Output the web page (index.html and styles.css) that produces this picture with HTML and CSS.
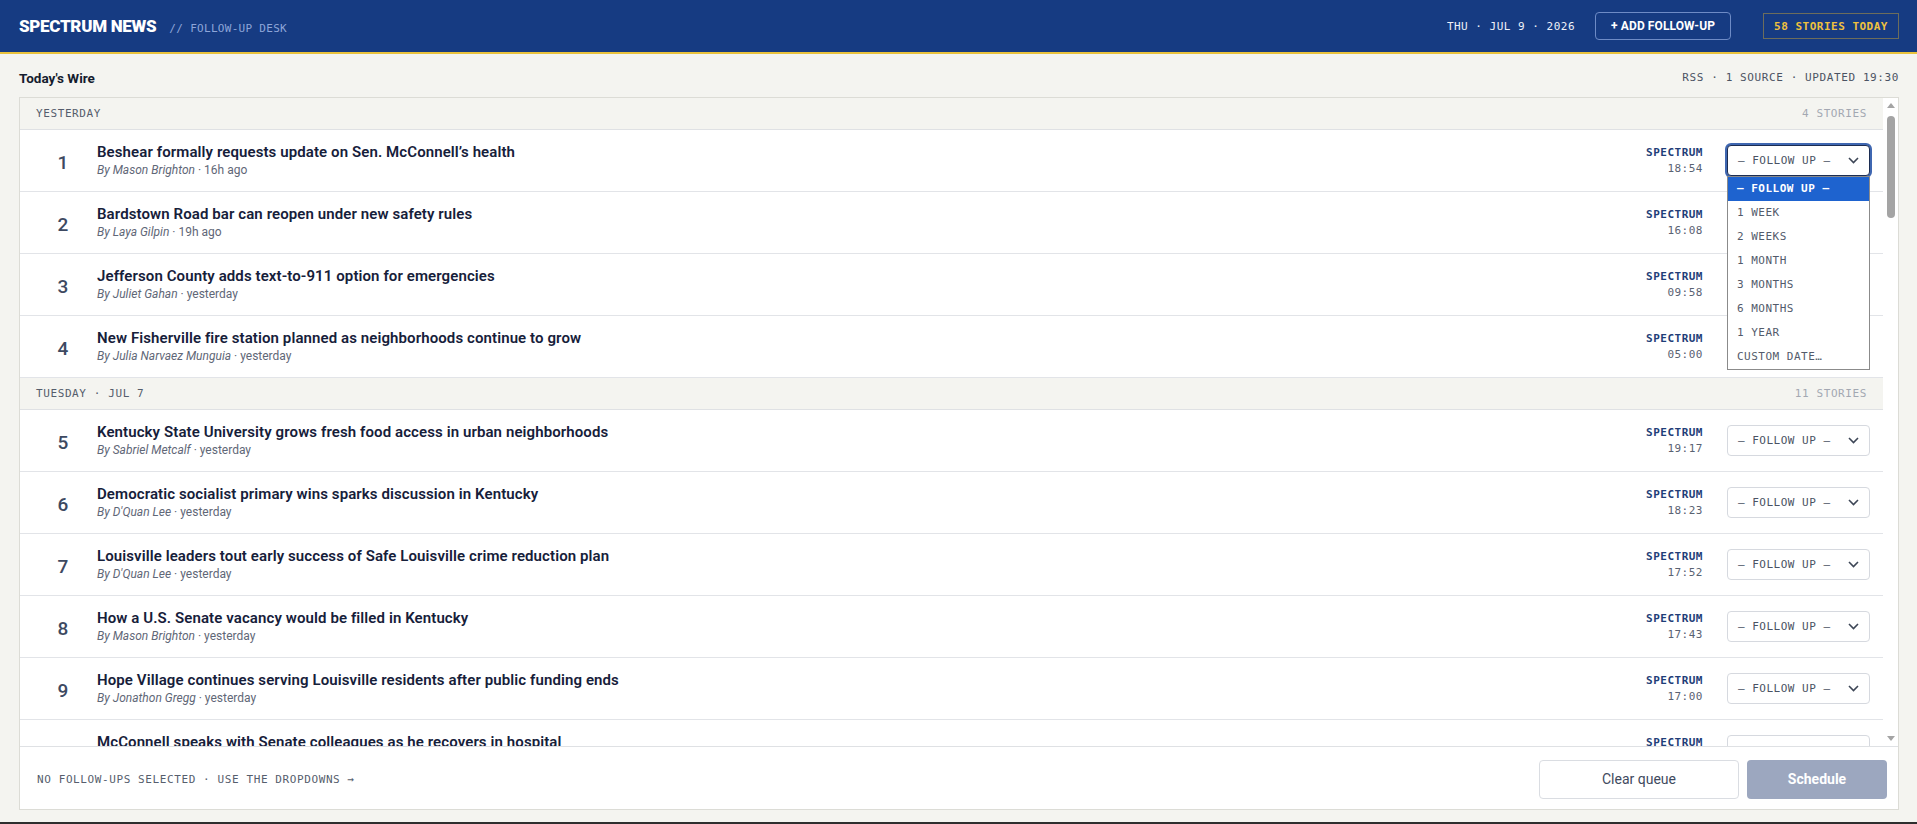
FILE: index.html
```html
<!doctype html>
<html lang="en">
<head>
    <meta charset="UTF-8">
    <meta name="viewport" content="width=device-width, initial-scale=1.0">
    <title>Spectrum News // Follow-up Desk</title>
    <link rel="stylesheet" href="styles.css">
</head>
<body>
<div class="app">
    <header class="topbar">
        <div class="brand">
            <span class="brand-name">SPECTRUM NEWS</span>
            <span class="brand-desk">// FOLLOW-UP DESK</span>
        </div>
        <div class="topbar-right">
            <span class="today">THU · JUL 9 · 2026</span>
            <button class="btn-add" type="button">+ ADD FOLLOW-UP</button>
            <span class="count">58 STORIES TODAY</span>
        </div>
    </header>

    <main class="desk">
        <div class="wire-head">
            <h1>Today's Wire</h1>
            <span class="feed-meta">RSS · 1 SOURCE · UPDATED 19:30</span>
        </div>
        <section class="panel">
            <div class="panel-body">
                <div class="wire" id="wire"></div>
                <div class="rail">
                    <span class="rail-btn rail-up"></span>
                    <span class="rail-thumb"></span>
                    <span class="rail-btn rail-down"></span>
                </div>
            </div>
            <footer class="queue">
                <span class="queue-note">NO FOLLOW-UPS SELECTED · USE THE DROPDOWNS →</span>
                <div class="queue-actions">
                    <button class="btn-clear" type="button">Clear queue</button>
                    <button class="btn-schedule" type="button" disabled>Schedule</button>
                </div>
            </footer>
        </section>
    </main>
</div>
<script src="app.js"></script>
</body>
</html>
```

FILE: styles.css
```css
*{
    padding: 0;
    margin: 0;
    box-sizing: border-box;
}
html{
    background: #2e2e2e;
}
body{
    font-family: Roboto, "Noto Sans", Arial, sans-serif;
    color: #18213a;
}
button{
    font-family: inherit;
    cursor: pointer;
}
.app{
    height: calc(100vh - 2px);
    display: flex;
    flex-direction: column;
    background: #f4f4f0;
}

/* top bar */
.topbar{
    height: 54px;
    flex: none;
    display: flex;
    align-items: center;
    justify-content: space-between;
    padding: 0 18px 0 19px;
    background: #163b82;
    border-bottom: 2px solid #e9c23c;
}
.brand{
    display: flex;
    align-items: baseline;
}
.brand-name{
    color: #fff;
    font-size: 17px;
    font-weight: 900;
    letter-spacing: -0.3px;
}
.brand-desk{
    margin-left: 13px;
    font-family: "DejaVu Sans Mono", "Liberation Mono", monospace;
    font-size: 11px;
    letter-spacing: .3px;
    color: #8ea6d9;
}
.topbar-right{
    display: flex;
    align-items: center;
}
.today{
    font-family: "DejaVu Sans Mono", "Liberation Mono", monospace;
    font-size: 11px;
    letter-spacing: .5px;
    color: #eef1f8;
}
.btn-add{
    height: 28px;
    margin-left: 20px;
    padding: 0 15px;
    background: transparent;
    border: 1px solid #6e8bc6;
    border-radius: 4px;
    color: #fff;
    font-size: 12px;
    font-weight: 700;
    letter-spacing: .1px;
}
.count{
    height: 26px;
    margin-left: 32px;
    padding: 0 10px;
    display: flex;
    align-items: center;
    border: 1px solid #6c6d5c;
    font-family: "DejaVu Sans Mono", "Liberation Mono", monospace;
    font-size: 11px;
    font-weight: 700;
    letter-spacing: .5px;
    color: #efc13e;
}

/* desk */
.desk{
    flex: 1;
    min-height: 0;
    display: flex;
    flex-direction: column;
    padding: 0 18px 12px 19px;
}
.wire-head{
    flex: none;
    display: flex;
    align-items: center;
    justify-content: space-between;
    padding: 16px 0 11px;
    line-height: 16px;
}
.wire-head h1{
    font-size: 13.5px;
    font-weight: 700;
    color: #141c2e;
}
.feed-meta{
    font-family: "DejaVu Sans Mono", "Liberation Mono", monospace;
    font-size: 11px;
    letter-spacing: .6px;
    color: #4b5363;
}
.panel{
    flex: 1;
    min-height: 0;
    display: flex;
    flex-direction: column;
    background: #fff;
    border: 1px solid #dcdcd6;
}
.panel-body{
    flex: 1;
    min-height: 0;
    display: flex;
}
.wire{
    flex: 1;
    min-width: 0;
    overflow-y: auto;
    scrollbar-width: none;
}

/* scroll rail beside the list */
.rail{
    width: 15px;
    flex: none;
    display: flex;
    flex-direction: column;
    align-items: center;
    background: #fff;
}
.rail-btn{
    width: 15px;
    height: 15px;
    flex: none;
    display: flex;
    align-items: center;
    justify-content: center;
}
.rail-up::before{
    content: "";
    border-left: 4px solid transparent;
    border-right: 4px solid transparent;
    border-bottom: 5px solid #a4a4a4;
}
.rail-down{
    margin-top: auto;
}
.rail-down::before{
    content: "";
    border-left: 4px solid transparent;
    border-right: 4px solid transparent;
    border-top: 5px solid #a4a4a4;
}
.rail-thumb{
    width: 8px;
    height: 102px;
    margin-top: 3px;
    border-radius: 4px;
    background: #a4a4a4;
}

/* day group */
.day{
    height: 32px;
    display: flex;
    align-items: center;
    justify-content: space-between;
    padding: 0 16px;
    background: #f4f4f0;
    border-bottom: 1px solid #dfe1e4;
    font-family: "DejaVu Sans Mono", "Liberation Mono", monospace;
    font-size: 11px;
    letter-spacing: .6px;
    color: #555d6c;
}
.day-count{
    color: #a3a8b2;
}

/* story rows */
.row{
    height: 62px;
    display: flex;
    align-items: center;
    padding: 0 13px 0 17px;
    border-bottom: 1px solid #e2e4e8;
}
.num{
    width: 52px;
    flex: none;
    padding-top: 3px;
    text-align: center;
    font-size: 19px;
    font-weight: 500;
    color: #3d4961;
}
.story{
    flex: 1;
    min-width: 0;
    margin-left: 8px;
}
.title{
    font-size: 15px;
    font-weight: 600;
    line-height: 19px;
    letter-spacing: .1px;
    color: #16203a;
    white-space: nowrap;
}
.byline{
    font-size: 12px;
    line-height: 16px;
    color: #5f6777;
}
.byline em{
    font-style: italic;
}
.src{
    margin-right: 24px;
    text-align: right;
    font-family: "DejaVu Sans Mono", "Liberation Mono", monospace;
    font-size: 11px;
    line-height: 16px;
    letter-spacing: .5px;
}
.src-name{
    font-weight: 700;
    color: #1f3e78;
}
.src-time{
    color: #5a6272;
}

/* follow-up picker */
.pick-wrap{
    position: relative;
    flex: none;
}
.pick{
    width: 143px;
    height: 31px;
    display: flex;
    align-items: center;
    justify-content: space-between;
    padding: 0 10px;
    background: #fff;
    border: 1px solid #d6d9df;
    border-radius: 4px;
    font-family: "DejaVu Sans Mono", "Liberation Mono", monospace;
    font-size: 11px;
    letter-spacing: .5px;
    color: #4a5263;
}
.pick svg{
    width: 11px;
    height: 7px;
    fill: none;
    stroke: #3d4656;
    stroke-width: 1.6;
}
.pick.is-open{
    border-color: #1c2d52;
    box-shadow: 0 0 0 2px #3f67b1;
}
.menu{
    position: absolute;
    top: 100%;
    left: 0;
    width: 143px;
    z-index: 10;
    background: #fff;
    border: 1px solid #8b8b8b;
}
.menu div{
    height: 24px;
    line-height: 24px;
    padding-left: 9px;
    font-family: "DejaVu Sans Mono", "Liberation Mono", monospace;
    font-size: 11px;
    letter-spacing: .5px;
    color: #535b6b;
}
.menu .on{
    background: #1e63cf;
    color: #fff;
    font-weight: 700;
}

/* queue footer */
.queue{
    height: 63px;
    flex: none;
    display: flex;
    align-items: center;
    justify-content: space-between;
    padding: 2px 11px 0 17px;
    border-top: 1px solid #dfe1e4;
}
.queue-note{
    font-family: "DejaVu Sans Mono", "Liberation Mono", monospace;
    font-size: 11px;
    letter-spacing: .6px;
    color: #565e6d;
}
.queue-actions{
    display: flex;
    gap: 8px;
}
.btn-clear{
    width: 200px;
    height: 39px;
    background: #fff;
    border: 1px solid #dadde2;
    border-radius: 4px;
    font-size: 14px;
    color: #3f4a5e;
}
.btn-schedule{
    width: 140px;
    height: 39px;
    background: #9ca7bf;
    border: none;
    border-radius: 4px;
    font-size: 14px;
    font-weight: 700;
    color: #fff;
}
```

FILE: app.js
```js
// follow-up choices shown in every picker
var OPTIONS = ["— FOLLOW UP —", "1 WEEK", "2 WEEKS", "1 MONTH", "3 MONTHS", "6 MONTHS", "1 YEAR", "CUSTOM DATE…"];

// today's wire, newest first: [headline, reporter, age, time]
var FEED = [
    {day: "YESTERDAY", stories: [
        ["Beshear formally requests update on Sen. McConnell’s health", "Mason Brighton", "16h ago", "18:54"],
        ["Bardstown Road bar can reopen under new safety rules", "Laya Gilpin", "19h ago", "16:08"],
        ["Jefferson County adds text-to-911 option for emergencies", "Juliet Gahan", "yesterday", "09:58"],
        ["New Fisherville fire station planned as neighborhoods continue to grow", "Julia Narvaez Munguia", "yesterday", "05:00"]
    ]},
    {day: "TUESDAY · JUL 7", stories: [
        ["Kentucky State University grows fresh food access in urban neighborhoods", "Sabriel Metcalf", "yesterday", "19:17"],
        ["Democratic socialist primary wins sparks discussion in Kentucky", "D'Quan Lee", "yesterday", "18:23"],
        ["Louisville leaders tout early success of Safe Louisville crime reduction plan", "D'Quan Lee", "yesterday", "17:52"],
        ["How a U.S. Senate vacancy would be filled in Kentucky", "Mason Brighton", "yesterday", "17:43"],
        ["Hope Village continues serving Louisville residents after public funding ends", "Jonathon Gregg", "yesterday", "17:00"],
        ["McConnell speaks with Senate colleagues as he recovers in hospital", "Mason Brighton", "yesterday", "16:31"],
        ["Metro Council weighs new rules for short-term rentals", "Laya Gilpin", "yesterday", "15:10"],
        ["LG&E crews restore power after overnight storms in south Louisville", "Juliet Gahan", "yesterday", "13:42"],
        ["Kentucky Derby Museum unveils summer exhibit on Black jockeys", "Sabriel Metcalf", "yesterday", "11:26"],
        ["JCPS board approves bus route changes ahead of new school year", "Jonathon Gregg", "yesterday", "09:05"],
        ["Waterfront Park hosts free concert series through August", "Julia Narvaez Munguia", "yesterday", "07:30"]
    ]},
    {day: "MONDAY · JUL 6", stories: [
        ["Heat advisory issued for Louisville as temperatures near 100", "Juliet Gahan", "3d ago", "20:12"],
        ["Frankfort lawmakers return for special session on budget", "Mason Brighton", "3d ago", "19:40"],
        ["TARC announces reduced fares for students this fall", "Laya Gilpin", "3d ago", "18:05"],
        ["Shively neighbors push for safer crosswalks on Dixie Highway", "D'Quan Lee", "3d ago", "17:21"],
        ["University of Louisville researchers study bourbon barrel reuse", "Sabriel Metcalf", "3d ago", "16:48"],
        ["Lexington farmers market expands to second weekday", "Jonathon Gregg", "3d ago", "15:30"],
        ["Public library branches extend hours for summer reading", "Julia Narvaez Munguia", "3d ago", "14:02"],
        ["Kentucky unemployment rate holds steady in June report", "Mason Brighton", "3d ago", "12:45"],
        ["Butchertown developer files plans for mixed-use project", "Laya Gilpin", "3d ago", "11:17"],
        ["Beshear signs order on disaster relief for eastern Kentucky", "D'Quan Lee", "3d ago", "10:20"],
        ["Louisville Zoo welcomes new red panda cub", "Juliet Gahan", "3d ago", "09:38"],
        ["Metro police add officers to downtown walking patrols", "Jonathon Gregg", "3d ago", "08:14"],
        ["Bowling Green plant to add 300 jobs by next year", "Sabriel Metcalf", "3d ago", "07:02"],
        ["Cherokee Park trail closures expected during repairs", "Julia Narvaez Munguia", "3d ago", "06:15"]
    ]},
    {day: "SUNDAY · JUL 5", stories: [
        ["Fireworks cleanup continues along the Ohio River", "Laya Gilpin", "4d ago", "21:10"],
        ["Kentucky health officials urge caution as COVID cases tick up", "Juliet Gahan", "4d ago", "19:55"],
        ["Old Louisville porch concerts draw record crowds", "Sabriel Metcalf", "4d ago", "18:30"],
        ["Attorney general joins multistate suit over utility rates", "Mason Brighton", "4d ago", "17:06"],
        ["Newburg community garden harvest feeds neighbors", "D'Quan Lee", "4d ago", "15:44"],
        ["Jeffersontown approves new sidewalk plan", "Jonathon Gregg", "4d ago", "14:19"],
        ["Kentucky State Fair announces concert lineup", "Julia Narvaez Munguia", "4d ago", "13:02"],
        ["Highlands restaurant marks 50 years on Bardstown Road", "Laya Gilpin", "4d ago", "11:48"],
        ["Fort Knox soldiers return from overseas deployment", "Mason Brighton", "4d ago", "10:35"],
        ["Louisville City FC earns late win at Lynn Stadium", "Sabriel Metcalf", "4d ago", "09:12"],
        ["Sewer project to close portions of Preston Highway", "Juliet Gahan", "4d ago", "08:00"],
        ["Portland neighborhood art walk returns this month", "D'Quan Lee", "4d ago", "07:24"],
        ["Drought watch declared for parts of western Kentucky", "Jonathon Gregg", "4d ago", "06:10"]
    ]},
    {day: "SATURDAY · JUL 4", stories: [
        ["Thunder on the river: Fourth of July celebrations across Louisville", "Julia Narvaez Munguia", "5d ago", "22:40"],
        ["Naturalization ceremony welcomes 80 new citizens", "Laya Gilpin", "5d ago", "21:05"],
        ["Boat safety patrols increase on the Ohio for holiday", "Juliet Gahan", "5d ago", "19:48"],
        ["Kentucky veterans honored at Cave Hill ceremony", "Mason Brighton", "5d ago", "18:22"],
        ["Crescent Hill parade returns after two-year break", "Sabriel Metcalf", "5d ago", "17:10"],
        ["Firework injuries prompt warnings from UofL Health", "D'Quan Lee", "5d ago", "16:03"],
        ["Small businesses report busy holiday weekend", "Jonathon Gregg", "5d ago", "14:51"],
        ["Frankfort hosts Independence Day reading of the Declaration", "Mason Brighton", "5d ago", "13:36"],
        ["Storm chances could affect evening fireworks shows", "Juliet Gahan", "5d ago", "12:20"],
        ["Louisville pools offer free admission for the holiday", "Laya Gilpin", "5d ago", "11:02"],
        ["Anchorage parade celebrates 75th year", "Julia Narvaez Munguia", "5d ago", "10:15"],
        ["Gas prices dip slightly across Kentucky ahead of travel", "Sabriel Metcalf", "5d ago", "09:26"],
        ["Iroquois Park amphitheater announces fall season", "D'Quan Lee", "5d ago", "08:40"],
        ["Volunteer groups clean up Beargrass Creek banks", "Jonathon Gregg", "5d ago", "07:55"],
        ["Louisville airport expects record holiday travel", "Mason Brighton", "5d ago", "07:05"],
        ["Weekend road work paused for the holiday", "Juliet Gahan", "5d ago", "06:00"]
    ]}
];

var CHEVRON = '<svg viewBox="0 0 11 7"><path d="M1 1l4.5 4.5L10 1"/></svg>';

function buildPicker(open) {
    var html = '<div class="pick-wrap">'
        + '<div class="pick' + (open ? ' is-open' : '') + '"><span>' + OPTIONS[0] + '</span>' + CHEVRON + '</div>';
    if (open) {
        html += '<div class="menu">';
        for (var i = 0; i < OPTIONS.length; i++) {
            html += '<div' + (i == 0 ? ' class="on"' : '') + '>' + OPTIONS[i] + '</div>';
        }
        html += '</div>';
    }
    return html + '</div>';
}

var wire = document.getElementById("wire");
var n = 0;
FEED.forEach(function (group) {
    var head = document.createElement("div");
    head.className = "day";
    head.innerHTML = '<span>' + group.day + '</span><span class="day-count">' + group.stories.length + ' STORIES</span>';
    wire.appendChild(head);

    group.stories.forEach(function (s) {
        n++;
        var row = document.createElement("div");
        row.className = "row";
        row.innerHTML = '<div class="num">' + n + '</div>'
            + '<div class="story"><div class="title"></div>'
            + '<div class="byline"><em>By ' + s[1] + '</em> · ' + s[2] + '</div></div>'
            + '<div class="src"><div class="src-name">SPECTRUM</div><div class="src-time">' + s[3] + '</div></div>'
            + buildPicker(n == 1);
        row.querySelector(".title").textContent = s[0];
        wire.appendChild(row);
    });
});
```
